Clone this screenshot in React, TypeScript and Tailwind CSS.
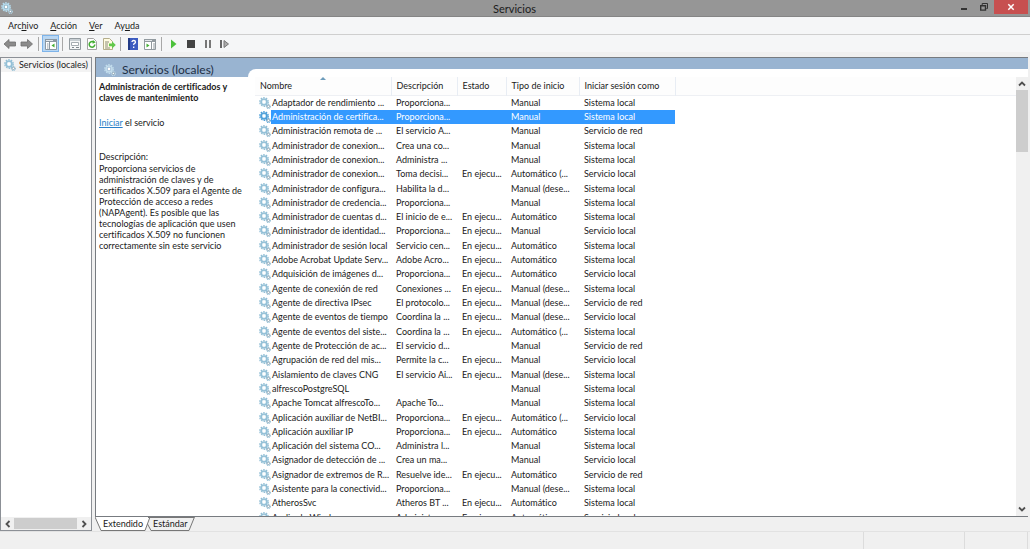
import clsx from 'clsx';

type Service = [name: string, description: string, running: boolean, startup: string, account: string];

const services: Service[] = [
  ['Adaptador de rendimiento ...', 'Proporciona...', false, 'Manual', 'Sistema local'],
  ['Administración de certifica...', 'Proporciona...', false, 'Manual', 'Sistema local'],
  ['Administración remota de ...', 'El servicio A...', false, 'Manual', 'Servicio de red'],
  ['Administrador de conexion...', 'Crea una co...', false, 'Manual', 'Sistema local'],
  ['Administrador de conexion...', 'Administra ...', false, 'Manual', 'Sistema local'],
  ['Administrador de conexion...', 'Toma decisi...', true, 'Automático (...', 'Servicio local'],
  ['Administrador de configura...', 'Habilita la d...', false, 'Manual (dese...', 'Sistema local'],
  ['Administrador de credencia...', 'Proporciona...', false, 'Manual', 'Sistema local'],
  ['Administrador de cuentas d...', 'El inicio de e...', true, 'Automático', 'Sistema local'],
  ['Administrador de identidad...', 'Proporciona...', true, 'Manual', 'Servicio local'],
  ['Administrador de sesión local', 'Servicio cen...', true, 'Automático', 'Sistema local'],
  ['Adobe Acrobat Update Serv...', 'Adobe Acro...', true, 'Automático', 'Sistema local'],
  ['Adquisición de imágenes d...', 'Proporciona...', true, 'Automático', 'Servicio local'],
  ['Agente de conexión de red', 'Conexiones ...', true, 'Manual (dese...', 'Sistema local'],
  ['Agente de directiva IPsec', 'El protocolo...', true, 'Manual (dese...', 'Servicio de red'],
  ['Agente de eventos de tiempo', 'Coordina la ...', true, 'Manual (dese...', 'Servicio local'],
  ['Agente de eventos del siste...', 'Coordina la ...', true, 'Automático (...', 'Sistema local'],
  ['Agente de Protección de ac...', 'El servicio d...', false, 'Manual', 'Servicio de red'],
  ['Agrupación de red del mis...', 'Permite la c...', true, 'Manual', 'Servicio local'],
  ['Aislamiento de claves CNG', 'El servicio Ai...', true, 'Manual (dese...', 'Sistema local'],
  ['alfrescoPostgreSQL', '', false, 'Manual', 'Sistema local'],
  ['Apache Tomcat alfrescoTo...', 'Apache To...', false, 'Manual', 'Sistema local'],
  ['Aplicación auxiliar de NetBI...', 'Proporciona...', true, 'Automático (...', 'Servicio local'],
  ['Aplicación auxiliar IP', 'Proporciona...', true, 'Automático', 'Sistema local'],
  ['Aplicación del sistema CO...', 'Administra l...', false, 'Manual', 'Sistema local'],
  ['Asignador de detección de ...', 'Crea un ma...', false, 'Manual', 'Servicio local'],
  ['Asignador de extremos de R...', 'Resuelve ide...', true, 'Automático', 'Servicio de red'],
  ['Asistente para la conectivid...', 'Proporciona...', false, 'Manual (dese...', 'Sistema local'],
  ['AtherosSvc', 'Atheros BT ...', true, 'Automático', 'Sistema local'],
  ['Audio de Windows', 'Administra ...', true, 'Automático', 'Servicio local'],
];

const SELECTED = 1;

function Gears({ className, tone = '#92bfd6', fill = '#dcecf4' }: { className?: string; tone?: string; fill?: string }) {
  return (
    <svg viewBox="0 0 12 12" className={clsx('shrink-0', className)} fill="none" aria-hidden="true">
      <circle cx="5" cy="5" r="4.3" stroke={tone} strokeWidth="1.2" strokeDasharray="1.6 1.1" />
      <circle cx="5" cy="5" r="3" stroke={tone} strokeWidth="1.7" fill={fill} />
      <circle cx="5" cy="5" r="1.4" fill="#fff" />
      <circle cx="9.400" cy="9.400" r="2" stroke={tone} strokeWidth="1.1" strokeDasharray="1 0.57" />
      <circle cx="9.400" cy="9.400" r="1.2" stroke="#8fa9b8" strokeWidth="1" fill="#fff" />
    </svg>
  );
}

function Chevron({ d }: { d: string }) {
  return (
    <svg viewBox="0 0 8 8" className="size-2" fill="none" stroke="#505050" strokeWidth="1.8" aria-hidden="true">
      <path d={d} />
    </svg>
  );
}

function TitleBar() {
  return (
    <header className="flex h-[17px] shrink-0 items-start border-b border-[#858585] bg-[#969696]">
      <div className="flex h-4 flex-1 items-center pl-px">
        <Gears className="size-3" tone="#b5dcee" fill="#84a8b8" />
      </div>
      <h1 className="text-[11px] leading-[17px] text-[#1c1c1c]">Servicios</h1>
      <div className="flex flex-1 justify-end pr-[2px]">
        <button aria-label="Minimizar" className="flex h-[14px] w-5 items-center justify-center">
          <svg viewBox="0 0 8 8" className="size-2" aria-hidden="true">
            <path d="M1 5h6v2H1z" fill="#333" />
          </svg>
        </button>
        <button aria-label="Restaurar" className="flex h-[14px] w-5 items-center justify-center">
          <svg viewBox="0 0 8 8" className="size-2" fill="none" stroke="#333" aria-hidden="true">
            <path d="M2.2 2V.5h5.3v5H6.4" />
            <path d="M.7 2.7h4.8v4.4H.7z" strokeWidth="1.4" />
          </svg>
        </button>
        <button aria-label="Cerrar" className="flex h-[14px] w-[34px] items-center justify-center bg-[#c75050]">
          <svg viewBox="0 0 8 8" className="size-2" stroke="#fff" strokeWidth="1.5" aria-hidden="true">
            <path d="M1.3 1.3l5.4 5.4M6.7 1.3L1.3 6.7" />
          </svg>
        </button>
      </div>
    </header>
  );
}

function MenuBar() {
  return (
    <nav className="flex h-[18px] shrink-0 items-center gap-3 border-b border-[#cfcfcf] bg-[#f5f6f7] pl-2 text-[9px] leading-[14px]">
      <button>Arc<u>h</u>ivo</button>
      <button><u>A</u>cción</button>
      <button><u>V</u>er</button>
      <button>Ay<u>u</u>da</button>
    </nav>
  );
}

function Separator() {
  return <div className="mx-[3px] h-[14px] w-px shrink-0 bg-[#a8a8a8]" />;
}

function ToolButton({ label, active, children }: { label: string; active?: boolean; children: React.ReactNode }) {
  return (
    <button
      aria-label={label}
      className={clsx(
        'flex h-[17px] w-[17px] shrink-0 items-center justify-center',
        active && 'border border-[#7eb4ea] bg-[#b9d7f3]',
      )}
    >
      <svg viewBox="0 0 14 14" className="size-[14px] shrink-0" fill="none" aria-hidden="true">
        {children}
      </svg>
    </button>
  );
}

function ToolBar() {
  return (
    <div className="flex h-[17px] shrink-0 items-center bg-[#f5f6f7] pl-px">
      <ToolButton label="Atrás">
        <path d="M1 7l5-4.500V5h6.500v4H6v2.500z" fill="#8b8b8b" stroke="#6e6e6e" strokeWidth=".8" />
      </ToolButton>
      <ToolButton label="Adelante">
        <path d="M12.500 7l-5-4.500V5H1v4h6.500v2.500z" fill="#8b8b8b" stroke="#6e6e6e" strokeWidth=".8" />
      </ToolButton>
      <Separator />
      <ToolButton label="Mostrar árbol de consola" active>
        <path d="M1.500 2.500h11v10h-11z" fill="#fff" stroke="#8b98a3" />
        <path d="M1 2h12v3H1z" fill="#8b98a3" />
        <path d="M2 3.500h7" stroke="#dfe6ec" />
        <path d="M5.500 5v7M3 7h1.500M3 9h1.500M3 11h1.500" stroke="#8b98a3" />
        <path d="M10.500 6.500v4L7.500 8.500z" fill="#45b035" />
      </ToolButton>
      <Separator />
      <ToolButton label="Propiedades">
        <path d="M1.500 1.500h11v11h-11z" fill="#f4f6f7" stroke="#929a9f" />
        <path d="M2 3h10" stroke="#9ca8b0" />
        <path d="M3.500 5.500h7v3h-7z" fill="#fff" stroke="#a4acb1" />
        <path d="M4 10.500h2M8 10.500h3" stroke="#7f888e" />
      </ToolButton>
      <ToolButton label="Actualizar">
        <path d="M2.500 1.500h6l3 3v8h-9z" fill="#fff" stroke="#a4a4a4" />
        <path d="M9.800 7.500A2.800 2.800 0 1 1 8.500 5" stroke="#42ad32" strokeWidth="1.500" />
        <path d="M7.800 3l3 2.300-3.200 1.500z" fill="#42ad32" />
      </ToolButton>
      <ToolButton label="Exportar lista">
        <path d="M1.500 1.500h6l3 3v8h-9z" fill="#fffbe0" stroke="#b4ad8b" />
        <path d="M3 5h4M3 7h3M3 9h3M3 11h5" stroke="#8b8b7b" />
        <path d="M7 6.500h3V4.300L13.800 8 10 11.500V9.300H7z" fill="#62c84a" />
      </ToolButton>
      <Separator />
      <ToolButton label="Ayuda">
        <path d="M2 1h10v12H2z" fill="#3d5cc0" />
        <path d="M2 1h2v12H2z" fill="#223b87" />
        <path d="M6 5q0-1.500 1.700-1.500T9.500 5q0 .9-1 1.400T7.700 8M7.700 9.500V11" stroke="#fff" strokeWidth="1.300" />
      </ToolButton>
      <ToolButton label="Mostrar panel de acciones">
        <path d="M1.500 2.500h11v10h-11z" fill="#fff" stroke="#929a9f" />
        <path d="M1 2h12v3H1z" fill="#929a9f" />
        <path d="M2 3.500h7" stroke="#e2e6e9" />
        <path d="M8.500 5v7M10 7h2M10 9h2M10 11h2" stroke="#929a9f" />
        <path d="M3.500 6.500v4l3-2z" fill="#45b035" />
      </ToolButton>
      <Separator />
      <ToolButton label="Iniciar servicio">
        <path d="M4 2.500v9L9.500 7z" fill="#4cc13b" />
      </ToolButton>
      <ToolButton label="Detener servicio">
        <path d="M3 3h8v8H3z" fill="#444" />
      </ToolButton>
      <ToolButton label="Pausar servicio">
        <path d="M4 3h2v8H4zM8 3h2v8H8z" fill="#777" />
      </ToolButton>
      <ToolButton label="Reiniciar servicio">
        <path d="M2 3h2v8H2z" fill="#666" />
        <path d="M6 3.500v7L10.500 7z" fill="#aaa" stroke="#777" />
      </ToolButton>
    </div>
  );
}

function Tree() {
  return (
    <aside className="flex w-[92px] shrink-0 flex-col border border-[#8c9096] bg-white">
      <ul className="flex-1">
        <li className="flex h-[14px] items-center gap-[3px] bg-[#f3f3f3] pl-[3px] text-[9px] leading-[14px] whitespace-nowrap">
          <Gears className="size-3" />
          Servicios (locales)
        </li>
      </ul>
      <div className="flex h-[13px] shrink-0 items-center bg-[#f0f0f0]">
        <button aria-label="Desplazar a la izquierda" className="flex w-[13px] justify-center">
          <Chevron d="M5.500 1L2.500 4l3 3" />
        </button>
        <div className="h-[11px] w-[63px] bg-[#cdcdcd]" />
        <button aria-label="Desplazar a la derecha" className="flex flex-1 justify-center">
          <Chevron d="M2.500 1l3 3-3 3" />
        </button>
      </div>
    </aside>
  );
}

function Details() {
  return (
    <section className="w-[152px] shrink-0 bg-white pt-1 pl-[3px] text-[9px] leading-[11px]">
      <h3 className="font-bold">
        Administración de certificados y<br />
        claves de mantenimiento
      </h3>
      <p className="mt-[14px]">
        <a href="#iniciar" className="text-[#2a7fc8] underline">Iniciar</a> el servicio
      </p>
      <p className="mt-[23px]">Descripción:</p>
      <p className="mt-px whitespace-nowrap">
        Proporciona servicios de<br />
        administración de claves y de<br />
        certificados X.509 para el Agente de<br />
        Protección de acceso a redes<br />
        (NAPAgent). Es posible que las<br />
        tecnologías de aplicación que usen<br />
        certificados X.509 no funcionen<br />
        correctamente sin este servicio
      </p>
    </section>
  );
}

function ServiceTable() {
  return (
    <div className="min-w-0 flex-1 overflow-hidden">
      <table className="h-[448px] w-full table-fixed border-collapse text-left text-[9px] leading-[14px] whitespace-nowrap">
        <colgroup>
          <col className="w-[136px]" />
          <col className="w-[66px]" />
          <col className="w-[49px]" />
          <col className="w-[73px]" />
          <col className="w-[96px]" />
          <col />
        </colgroup>
        <thead>
          <tr className="h-[18px] border-b border-[#eef0f4] bg-[#fdfdfd] [&>th]:border-r [&>th]:border-[#e8edf4] [&>th]:p-0 [&>th]:pl-[5px] [&>th]:font-normal">
            <th className="relative">
              Nombre
              <svg viewBox="0 0 6 3" className="absolute top-0 left-[65px] h-[3px] w-[6px]" aria-hidden="true">
                <path d="M3 0l3 3H0z" fill="#6d9cbb" />
              </svg>
            </th>
            <th>Descripción</th>
            <th>Estado</th>
            <th>Tipo de inicio</th>
            <th>Iniciar sesión como</th>
            <td />
          </tr>
        </thead>
        <tbody>
          {services.map(([name, description, running, startup, account], i) => {
            const selected = i === SELECTED;
            const cell = clsx('p-0 pl-[5px]', selected && 'bg-[#3399ff] text-white');
            return (
              <tr key={i}>
                <td className="p-0 pl-1">
                  <div className="flex h-[14px] items-center">
                    <Gears
                      className="size-3"
                      tone={selected ? '#4d9fd8' : undefined}
                      fill={selected ? '#b5dcf5' : undefined}
                    />
                    <span className={clsx('flex-1 pl-px', selected && 'bg-[#3399ff] text-white')}>{name}</span>
                  </div>
                </td>
                <td className={cell}>{description}</td>
                <td className={cell}>{running ? 'En ejecu...' : ''}</td>
                <td className={cell}>{startup}</td>
                <td className={cell}>{account}</td>
                <td className="p-0" />
              </tr>
            );
          })}
        </tbody>
      </table>
    </div>
  );
}

function ViewTabs() {
  return (
    <div className="flex h-[14px] shrink-0 text-[9px] leading-[13px]">
      <svg viewBox="0 0 7 14" className="h-[14px] w-[7px]" aria-hidden="true">
        <path d="M0 0h7v13.500H6z" fill="#fff" />
        <path d="M0 0l6 13.500h1" fill="none" stroke="#777" />
      </svg>
      <button className="border-b border-[#777] bg-white px-px">Extendido</button>
      <svg viewBox="0 0 9 14" className="h-[14px] w-[9px]" aria-hidden="true">
        <path d="M0 0h6L1 13.500H0z" fill="#fff" />
        <path d="M0 13.500h1L6 0M3.500 7L7 13.500h2M4 .5h5" fill="none" stroke="#777" />
      </svg>
      <button className="border-y border-[#777] leading-3">Estándar</button>
      <svg viewBox="0 0 7 14" className="h-[14px] w-[7px]" aria-hidden="true">
        <path d="M0 13.500h1L6.500 0M0 .5h6" fill="none" stroke="#777" />
      </svg>
    </div>
  );
}

function ServicesPane() {
  return (
    <main className="flex min-w-0 flex-1 flex-col">
      <div className="flex min-h-0 flex-1 flex-col border-y border-l border-[#777b80] bg-white">
        <div className="flex h-[19px] shrink-0 bg-[#99b4d1]">
          <div className="flex w-[152px] shrink-0 items-center gap-[6px] pt-1 pl-2">
            <Gears className="size-3" tone="#c3ddec" fill="#99b4d1" />
            <h2 className="text-[12px] leading-[15px] text-[#1e2f45]">Servicios (locales)</h2>
          </div>
          <div className="mt-[11px] flex-1 rounded-tl-lg bg-white" />
        </div>
        <div className="flex min-h-0 flex-1">
          <Details />
          <div className="w-[7px] shrink-0" />
          <ServiceTable />
          <div className="flex w-3 shrink-0 flex-col items-center bg-[#f0f0f0]">
            <button aria-label="Desplazar hacia arriba" className="flex h-[13px] items-center">
              <Chevron d="M1 5.500l3-3 3 3" />
            </button>
            <div className="h-[62px] w-full bg-[#cdcdcd]" />
            <div className="flex-1" />
            <button aria-label="Desplazar hacia abajo" className="flex h-[14px] items-center">
              <Chevron d="M1 2.500l3 3 3-3" />
            </button>
          </div>
        </div>
      </div>
      <ViewTabs />
    </main>
  );
}

export default function App() {
  return (
    <div className="flex h-screen flex-col overflow-hidden bg-[#f0f0f0] font-[Lato,'Open_Sans',sans-serif] text-[#1a1a1a] [font-variant-ligatures:none]">
      <TitleBar />
      <MenuBar />
      <ToolBar />
      <div className="flex min-h-0 flex-1 gap-[3px] pt-[5px] pr-[2px]">
        <Tree />
        <ServicesPane />
      </div>
      <footer className="flex h-[18px] shrink-0 justify-end border-t border-[#e2e2e2] pr-[2px]">
        <div className="w-[101px] border-l border-[#dcdcdc]" />
        <div className="w-16 border-x border-[#dcdcdc]" />
      </footer>
    </div>
  );
}
